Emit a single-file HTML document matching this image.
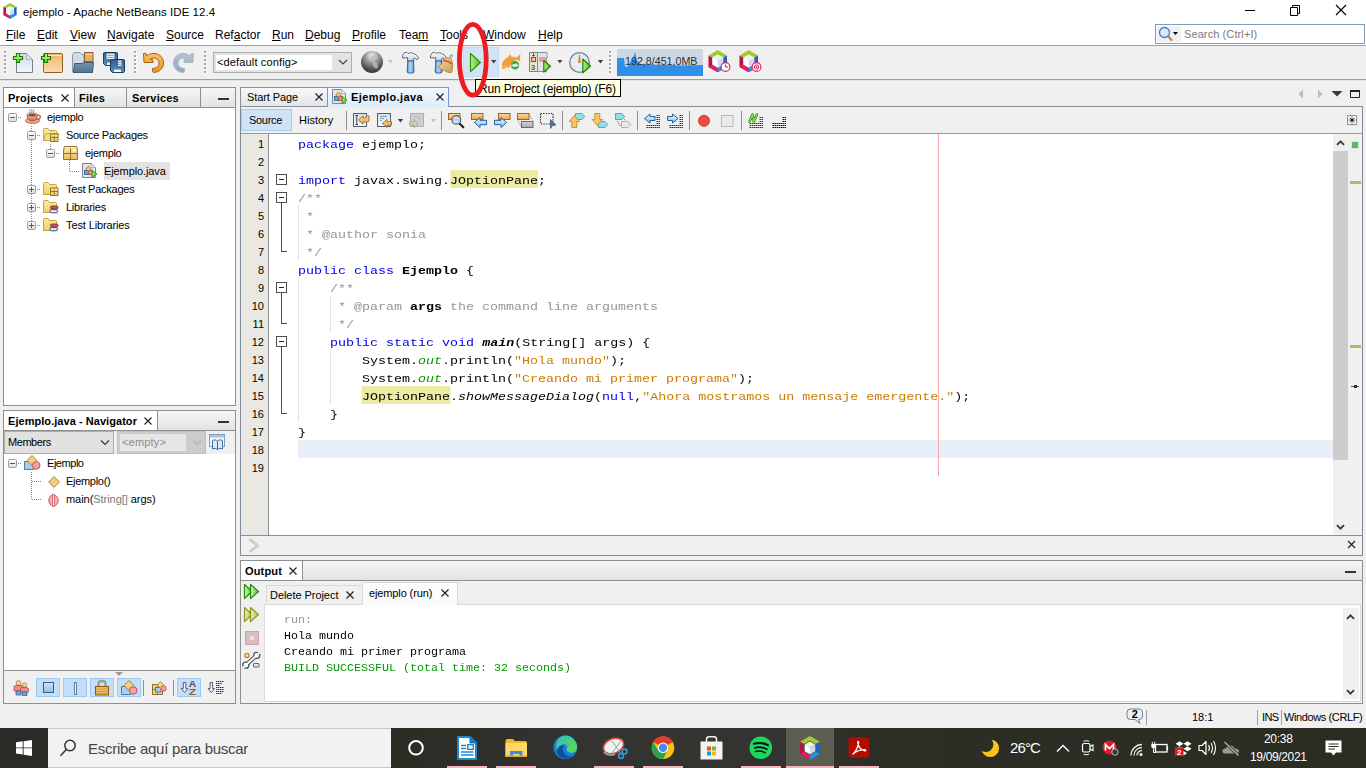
<!DOCTYPE html>
<html lang="es">
<head>
<meta charset="utf-8">
<title>ejemplo - Apache NetBeans IDE 12.4</title>
<style>
*{box-sizing:border-box;margin:0;padding:0}
html,body{width:1366px;height:768px;overflow:hidden;background:#f0f0f0;font-family:"Liberation Sans",sans-serif;font-size:11px;color:#000}
.a{position:absolute}
.t{position:absolute;white-space:nowrap;line-height:1}
.ui{font-family:"Liberation Sans",sans-serif;font-size:12px}
.th{font-family:"Liberation Sans",sans-serif;font-size:11px}
.mono{font-family:"Liberation Mono",monospace;font-size:13px;letter-spacing:0.2px}
u{text-decoration:underline;text-underline-offset:1px}
.mi{top:29px;font-size:12px}
.hnd{width:3px;height:24px;background-image:radial-gradient(circle at 1px 1px,#a8a8a8 0.9px,transparent 1.1px),radial-gradient(circle at 2px 2px,#fff 0.9px,transparent 1.1px);background-size:3px 4px}
.panel{border:1px solid #8e8f8f;background:#fff}
.tabbar{background:linear-gradient(#f6f6f6,#e2e2e2)}
.vsep{width:1px;background:#8e8f8f}
.tabt{font-weight:bold;font-size:11px;letter-spacing:0.2px}
.tr{font-size:11px;letter-spacing:-0.3px}
.vdot{width:1px;background-image:linear-gradient(#8a8a8a 50%,transparent 50%);background-size:1px 2px}
.hdot{height:1px;background-image:linear-gradient(90deg,#8a8a8a 50%,transparent 50%);background-size:2px 1px}
.nbtn{width:24px;height:19px;background:#c5def5;border:1px solid #99cbf5}
.ln{left:241px;width:23px;text-align:right;font-size:11px;letter-spacing:0px}
.code{left:298px;height:18px;line-height:18px;font-family:"Liberation Mono",monospace;font-size:10.500px;white-space:pre;transform:scaleX(1.26984);transform-origin:0 0;padding-top:2px}
.code b{font-weight:bold}
.k{color:#0000e6}.c{color:#969696}.c .ct{color:#969696}.c .ca{color:#000}.s{color:#ce7b00}.f{color:#009900}
.hl{background:#ecebA3;padding:5.050px 0 1.050px}
.gd{width:1px;background-image:linear-gradient(#c4c4c4 50%,transparent 50%);background-size:1px 2px}
.out{left:284px;height:16px;line-height:16px;font-family:"Liberation Mono",monospace;font-size:10px;white-space:pre;transform:scaleX(1.16667);transform-origin:0 0}
.ul{top:766px;height:2px;background:#f3b6be}
/* SECTION-CSS */
</style>
</head>
<body>
<!-- TITLEBAR -->
<div class="a" style="left:0;top:0;width:1366px;height:45px;background:#fff"></div>
<svg width="0" height="0" style="position:absolute"><defs>
<symbol id="nbcube" viewBox="0 0 20 23">
<path d="M10 0L19.500 5.500L15.700 7.700L10 4.400L4.300 7.700L0.500 5.500Z" fill="#a2c837"/>
<path d="M0.500 5.500L4.300 7.700V15.100L10 18.400V22.800L0.500 17.300Z" fill="#b3134a"/>
<path d="M0.500 17.300L4.300 15.100L10 18.400V22.800Z" fill="#e81d5f"/>
<path d="M19.500 5.500L15.700 7.700V15.100L10 18.400V22.800L19.500 17.300Z" fill="#1f62c8"/>
<path d="M19.500 17.300L15.700 15.100L10 18.400V22.800Z" fill="#2f8ee6"/>
<path d="M10 5.200L15 8.100L10 11L5 8.100Z" fill="#eef3e2"/>
<path d="M5 8.100L10 11V17.600L5 14.700Z" fill="#ffffff"/>
<path d="M15 8.100L10 11V17.600L15 14.700Z" fill="#cfdaea"/>
</symbol></defs></svg>
<svg class="a" style="left:3px;top:3px" width="14" height="16"><use href="#nbcube"/></svg>
<div class="t ui" id="ttl" style="left:23px;top:7px;font-size:11.500px;letter-spacing:0.05px">ejemplo - Apache NetBeans IDE 12.4</div>
<svg class="a" style="left:1240px;top:0" width="120" height="22" viewBox="0 0 120 22" fill="none" stroke="#000" stroke-width="1">
<path d="M5 10.5H15"/>
<path d="M50.5 7.5H57.5V15.500H50.5Z"/><path d="M52.5 7.500V5.500H59.5V13.500H57.5"/>
<path d="M96 5L106 15M106 5L96 15" stroke-width="1.1"/>
</svg>
<!-- /TITLEBAR -->
<!-- MENUBAR -->
<div class="t ui mi" style="left:6px"><u>F</u>ile</div>
<div class="t ui mi" style="left:37px"><u>E</u>dit</div>
<div class="t ui mi" style="left:70px"><u>V</u>iew</div>
<div class="t ui mi" style="left:107px"><u>N</u>avigate</div>
<div class="t ui mi" style="left:166px"><u>S</u>ource</div>
<div class="t ui mi" style="left:215px">Ref<u>a</u>ctor</div>
<div class="t ui mi" style="left:272px"><u>R</u>un</div>
<div class="t ui mi" style="left:305px"><u>D</u>ebug</div>
<div class="t ui mi" style="left:352px"><u>P</u>rofile</div>
<div class="t ui mi" style="left:399px">Tea<u>m</u></div>
<div class="t ui mi" style="left:440px"><u>T</u>ools</div>
<div class="t ui mi" style="left:483px"><u>W</u>indow</div>
<div class="t ui mi" style="left:538px"><u>H</u>elp</div>
<div class="a" style="left:1155px;top:24px;width:210px;height:20px;border:1px solid #7f9db9;background:#fff"></div>
<div class="a" style="left:1157px;top:26px;width:24px;height:16px;background:#f0f0f0"></div>
<svg class="a" style="left:1158px;top:26px" width="22" height="16" viewBox="0 0 22 16">
<path d="M9 9L13.500 14" stroke="#c98a2b" stroke-width="2.200" stroke-linecap="round"/>
<circle cx="6.500" cy="6.500" r="5" fill="#dbeafb" stroke="#3f7fd0" stroke-width="1.300"/>
<path d="M15 6H20L17.500 9Z" fill="#000"/>
</svg>
<div class="t th" style="left:1184px;top:29px;color:#7a7a7a;font-size:11px;letter-spacing:0.1px">Search (Ctrl+I)</div>
<div class="a" style="left:0;top:45px;width:1366px;height:1px;background:#a0a0a0"></div>
<!-- /MENUBAR -->
<!-- TOOLBAR -->
<div class="a" style="left:0;top:79px;width:1366px;height:1px;background:#a0a0a0"></div>
<div class="a" style="left:0;top:80px;width:1366px;height:1px;background:#e3e3e3"></div>
<div class="a hnd" style="left:4px;top:51px"></div>
<div class="a hnd" style="left:134px;top:51px"></div>
<div class="a hnd" style="left:204px;top:51px"></div>
<div class="a hnd" style="left:609px;top:51px"></div>
<div class="a" style="left:463px;top:47px;width:36px;height:30px;background:#d1e4f6;border:1px solid #c3dcf3"></div>
<svg class="a" style="left:0;top:46px" width="800" height="34" viewBox="0 46 800 34">
<defs>
<linearGradient id="gPage" x1="0" y1="0" x2="0" y2="1"><stop offset="0" stop-color="#cbd8e6"/><stop offset="1" stop-color="#f6f9fc"/></linearGradient>
<linearGradient id="gBox" x1="0" y1="0" x2="0" y2="1"><stop offset="0" stop-color="#ecb569"/><stop offset="1" stop-color="#f8dcb4"/></linearGradient>
<linearGradient id="gPlus" x1="0" y1="0" x2="0" y2="1"><stop offset="0" stop-color="#d4fba6"/><stop offset="1" stop-color="#6fd21e"/></linearGradient>
<linearGradient id="gFold" x1="0" y1="0" x2="0" y2="1"><stop offset="0" stop-color="#7391b0"/><stop offset="1" stop-color="#54738f"/></linearGradient>
<linearGradient id="gFlop" x1="0" y1="0" x2="0" y2="1"><stop offset="0" stop-color="#2d5f8f"/><stop offset="1" stop-color="#5f8db6"/></linearGradient>
<linearGradient id="gUndo" x1="0" y1="0" x2="0" y2="1"><stop offset="0" stop-color="#f9c262"/><stop offset="1" stop-color="#e8921a"/></linearGradient>
<linearGradient id="gRedo" x1="0" y1="0" x2="0" y2="1"><stop offset="0" stop-color="#b4c3d1"/><stop offset="1" stop-color="#93a8bb"/></linearGradient>
<radialGradient id="gGlobe" cx="0.5" cy="0.22" r="0.75"><stop offset="0" stop-color="#f4f4f4"/><stop offset="0.4" stop-color="#9c9c9c"/><stop offset="0.75" stop-color="#5a5a5a"/><stop offset="1" stop-color="#3a3a3a"/></radialGradient>
<linearGradient id="gHandle" x1="0" y1="0" x2="1" y2="0"><stop offset="0" stop-color="#5a9ad6"/><stop offset="0.5" stop-color="#b5d6f3"/><stop offset="1" stop-color="#4d8fcf"/></linearGradient>
<linearGradient id="gHead" x1="0" y1="0" x2="0" y2="1"><stop offset="0" stop-color="#ffffff"/><stop offset="1" stop-color="#c5ccd3"/></linearGradient>
<linearGradient id="gPlay" x1="0" y1="0" x2="1" y2="0"><stop offset="0" stop-color="#b9ee8c"/><stop offset="1" stop-color="#4fc01a"/></linearGradient>
<linearGradient id="gBroom" x1="0" y1="0" x2="1" y2="1"><stop offset="0" stop-color="#f3d9ab"/><stop offset="1" stop-color="#c99a55"/></linearGradient>
</defs>
<!-- new file -->
<path d="M16.500 53.500H26.500L32.500 59.500V72.500H16.500Z" fill="url(#gPage)" stroke="#75828f"/>
<path d="M26.500 53.500V59.500H32.500Z" fill="#dfe8f1" stroke="#9aa7b4" stroke-width="0.800"/>
<path d="M16.500 53.500H19.500V56.500H22.500V59.500H19.500V62.500H16.500V59.500H13.500V56.500H16.500Z" fill="url(#gPlus)" stroke="#148200" stroke-width="1.200"/>
<!-- new project -->
<rect x="43.500" y="53.500" width="19" height="19" rx="1" fill="url(#gBox)" stroke="#94601f"/>
<path d="M44.500 55.500H61.500" stroke="#fbe6c7" stroke-width="1"/>
<path d="M44.500 53.500H47.500V56.500H50.500V59.500H47.500V62.500H44.500V59.500H41.500V56.500H44.500Z" fill="url(#gPlus)" stroke="#148200" stroke-width="1.200"/>
<!-- open project -->
<path d="M72.500 72V54.500L74 52.500H80L81.500 54.500H84V62H92.500V72.500H73Z" fill="#cfdbe7" stroke="#8a9bab"/>
<rect x="84.500" y="52.500" width="8.500" height="9" fill="#e8ad62" stroke="#94601f"/>
<path d="M85 54.500H92.500" stroke="#f6d7ac"/>
<path d="M74.500 63.500H82L83.500 62.500H93.500L92.500 72.500H73.500Z" fill="url(#gFold)" stroke="#3f5b76"/>
<!-- save all -->
<g>
<path d="M103.500 53.500Q103.500 52.500 104.500 52.500H116.500Q117.500 52.500 117.500 53.500V64.500L116.500 65.500H105.500L103.500 63.500Z" fill="url(#gFlop)" stroke="#163f66"/>
<rect x="106.500" y="53.500" width="8" height="5.500" fill="#e9eef4"/>
<path d="M107.500 55.500H113.500M107.500 57.500H113.500" stroke="#9aa5b0"/>
<path d="M107 65V63.500Q107 62.500 108 62.500H113Q114 62.500 114 63.500V65Z" fill="#f4f6f8"/>
<path d="M110.500 60.500Q110.500 59.500 111.500 59.500H123.500Q124.500 59.500 124.500 60.500V71.500L123.500 72.500H112.500L110.500 70.500Z" fill="url(#gFlop)" stroke="#163f66"/>
<path d="M118 60.500H121.500V66H118Z" fill="#e9eef4"/>
<path d="M118 62.500H121M118 64.500H121" stroke="#9aa5b0"/>
<path d="M114 72V70.500Q114 69.500 115 69.500H120Q121 69.500 121 70.500V72Z" fill="#f4f6f8"/>
</g>
<!-- undo -->
<path d="M143.500 53.500L146 53.500L146.500 56C149 54 152 53.200 155 53.500C160 54 163.500 58 163.500 63C163.500 68.500 159 72.500 153.500 72.500L152.500 71.500V68.500C156 68.500 159 66.500 159 63C159 60 156.500 58 154 58C152.500 58 151 58.500 150 59.500L153 60V62.500L144 62.500Z" fill="url(#gUndo)" stroke="#a9600c" stroke-width="1" stroke-linejoin="round"/>
<!-- redo -->
<path d="M193.500 53.500L191 53.500L190.500 56C188 54 185 53.200 182 53.500C177 54 173.500 58 173.500 63C173.500 68.500 178 72.500 183.500 72.500L184.500 71.500V68.500C181 68.500 178 66.500 178 63C178 60 180.500 58 183 58C184.500 58 186 58.500 187 59.500L184 60V62.500L193 62.500Z" fill="url(#gRedo)" stroke="#aab8c5" stroke-width="1" stroke-linejoin="round"/>
<!-- globe -->
<circle cx="372" cy="62" r="11" fill="url(#gGlobe)"/>
<path d="M371 56C374 54 377 55 378 58C376 58 374 60 375 62C378 63 379 66 377 69C374 68 372 66 373 63C371 61 370 58 371 56Z" fill="#bdbdbd" opacity="0.750"/>
<path d="M388 60H393L390.500 63.500Z" fill="#c2c2c2"/>
<!-- hammer -->
<path d="M402.5 58L402.5 55.500L404.5 52.500H407L408 53.500C411 52 415.5 53 418.8 58L417 59.800C415.5 58.300 414.5 58 413.8 58.300V61H407.5V57.500L405 58Z" fill="url(#gHead)" stroke="#5d6d7d" stroke-linejoin="round"/>
<path d="M407.8 61H413.5L414 72L413 73H408.2L407.2 72Z" fill="url(#gHandle)" stroke="#2469ab" stroke-width="1"/>
<!-- clean hammer -->
<path d="M430.5 58L430.5 55.500L432.5 52.500H435L436 53.500C439 52 443.5 53 446.8 58L445 59.800C443.5 58.300 442.5 58 441.8 58.300V61H435.5V57.500L433 58Z" fill="url(#gHead)" stroke="#5d6d7d" stroke-linejoin="round"/>
<path d="M435.8 61H441.5L442 72L441 73H436.2L435.2 72Z" fill="url(#gHandle)" stroke="#2469ab" stroke-width="1"/>
<path d="M449.500 56L452 54.500L452.500 56.500L451 58Z" fill="#dfe6ee" stroke="#6b7c8c" stroke-width="0.800"/>
<path d="M444 58.500C446 57 449 57.500 451.500 59.500C453 63 453 68 451.500 72.500C448 73 446 71.500 444.500 70.500C442.500 70.500 440 69 438 67C441 65 443 62 444 58.500Z" fill="url(#gBroom)" stroke="#a97a3a" stroke-width="0.800"/>
<path d="M443.500 60.500C446 60.500 449.500 62 452 64" stroke="#d8452c" stroke-width="1.300" fill="none"/>
<!-- run -->
<path d="M470.500 53.500L480.500 62.500L470.500 71.500Z" fill="url(#gPlay)" stroke="#2e8f0c" stroke-width="1.200" stroke-linejoin="round"/>
<path d="M491 60H496.500L493.750 63.500Z" fill="#444"/>
<!-- fish -->
<path d="M502.300 66.500C502 62 505 58.500 508.500 57.200L510.300 54.800L511.200 57C513 57 514.800 57.500 516.300 57.800L520.200 54.800C519.600 56.800 519.600 58.800 520 60.800L516 59.500C514 61 512.500 62.500 510.500 64C509.800 65.300 509.300 66.800 508.800 68.300L507.300 66.300C505.800 67.500 504.300 68.500 502.800 68.800Z" fill="#f0a235" stroke="#e69422" stroke-width="0.500" stroke-linejoin="round"/>
<circle cx="504" cy="66" r="0.600" fill="#fff"/>
<circle cx="515" cy="65.300" r="3.300" fill="#f0f8ee" stroke="#3fa548" stroke-width="1.900"/>
<path d="M511 65.300H513.500M516.500 65.300H519" stroke="#f0f0f0" stroke-width="1"/>
<path d="M513 63.500L515.500 61.300V64.500ZM517 67.200L514.500 69.400V66.200Z" fill="#2f9a3c"/>
<!-- debug -->
<path d="M529.500 52.500H537.500V71.500H529.500Z" fill="#efe5c3" stroke="#6f7f92"/>
<path d="M537.500 52.500H546.500L547.500 54L546.500 55.500L547.500 57L546.500 58.500V71.500H537.500Z" fill="#e1e5ea" stroke="#7f8c9a"/>
<rect x="539" y="57" width="7.500" height="4.800" fill="#f69aa2"/>
<rect x="531.500" y="57.500" width="4" height="4" fill="#f4c9cc" stroke="#b83a44" stroke-width="1.100"/>
<path d="M533.500 53V56.500M532 55.500H535" stroke="#555" stroke-width="0.900" fill="none"/>
<text x="531" y="69.500" font-family="Liberation Sans,sans-serif" font-size="7.500" font-weight="bold" fill="#4a5878">3</text>
<path d="M543.800 60.500L550.500 66.300L543.800 72Z" fill="url(#gPlay)" stroke="#1f7f06" stroke-width="1.200" stroke-linejoin="round"/>
<path d="M557.300 60H562.500L559.900 63.500Z" fill="#444"/>
<!-- profile -->
<circle cx="579.500" cy="62.500" r="9.800" fill="#e3eef8" stroke="#76828f" stroke-width="1.300"/>
<circle cx="579.500" cy="62.500" r="7.800" fill="none" stroke="#9aa7b5" stroke-width="0.800" stroke-dasharray="0.700 3.380"/>
<path d="M579 55L580 55L580.800 63H578.200Z" fill="#e8792a"/>
<path d="M582.800 59L590.500 66L582.800 72.800Z" fill="url(#gPlay)" stroke="#1f7f06" stroke-width="1.200" stroke-linejoin="round"/>
<path d="M597.800 60H603.200L600.500 63.500Z" fill="#444"/>
<!-- memory -->
<rect x="617" y="49" width="86" height="27" fill="#cbd7e3"/>
<path d="M617 76V58H624L625 66.500H628L630 62L633 59L635 51.500L636.500 60L640 64L650 64.500L665 65L680 65.500L703 65V76Z" fill="#2f8ee8"/>
<text x="625" y="65" font-family="Liberation Sans,sans-serif" font-size="11" fill="#303030" textLength="72.500" lengthAdjust="spacingAndGlyphs">192,8/451,0MB</text>
<!-- profiler icons -->
<svg x="708" y="50" width="19.500" height="22.500"><use href="#nbcube"/></svg>
<circle cx="725.500" cy="67" r="4.400" fill="#fff" stroke="#d81b60" stroke-width="1.100"/>
<path d="M725.500 64.500V67H728" stroke="#d81b60" stroke-width="1" fill="none"/>
<svg x="739" y="50" width="19.500" height="22.500"><use href="#nbcube"/></svg>
<circle cx="756.500" cy="67" r="4.400" fill="#fff" stroke="#d81b60" stroke-width="1.100"/>
<circle cx="756.500" cy="67" r="2.200" fill="none" stroke="#d81b60" stroke-width="1"/>
<rect x="755.700" y="66.200" width="1.600" height="1.600" fill="#d81b60"/>
</svg>
<!-- combo -->
<div class="a" style="left:213px;top:52px;width:139px;height:21px;background:#e3e3e3;border:1px solid #adadad"></div>
<div class="a" style="left:216px;top:55px;width:116px;height:15px;background:#fff"></div>
<div class="t th" style="left:217px;top:57px;font-size:11px;letter-spacing:0.15px">&lt;default config&gt;</div>
<svg class="a" style="left:338px;top:58px" width="10" height="8" viewBox="0 0 10 8"><path d="M1 2L5 6L9 2" fill="none" stroke="#404040" stroke-width="1.100"/></svg>
<!-- /TOOLBAR -->
<!-- PROJECTS -->
<svg width="0" height="0" style="position:absolute">
<defs>
<linearGradient id="gExp" x1="0" y1="0" x2="0" y2="1"><stop offset="0" stop-color="#ffffff"/><stop offset="1" stop-color="#dcdcdc"/></linearGradient>
<linearGradient id="gFolderY" x1="0" y1="0" x2="0" y2="1"><stop offset="0" stop-color="#fbe9a6"/><stop offset="1" stop-color="#f0cf63"/></linearGradient>
<linearGradient id="gPkg" x1="0" y1="0" x2="0" y2="1"><stop offset="0" stop-color="#f8e6ac"/><stop offset="1" stop-color="#e6c062"/></linearGradient>
<symbol id="exM" viewBox="0 0 9 9"><rect x="0.500" y="0.500" width="8" height="8" rx="1.200" fill="url(#gExp)" stroke="#9b9b9b"/><path d="M2 4.500H7" stroke="#3557b8" stroke-width="1"/></symbol>
<symbol id="exP" viewBox="0 0 9 9"><rect x="0.500" y="0.500" width="8" height="8" rx="1.200" fill="url(#gExp)" stroke="#9b9b9b"/><path d="M2 4.500H7M4.500 2V7" stroke="#3557b8" stroke-width="1"/></symbol>
<symbol id="fPkg" viewBox="0 0 16 14"><path d="M0.500 12.500V1.500Q0.500 0.500 1.500 0.500H5L6.500 2.500H12.500Q13.500 2.500 13.500 3.500V12.500Z" fill="url(#gFolderY)" stroke="#c9a43c"/><rect x="7.500" y="6" width="7.500" height="7.500" fill="#f1d27a" stroke="#8a6a1c" stroke-width="0.900"/><path d="M7.500 9.500H15M11.250 6V13.500" stroke="#8a6a1c" stroke-width="0.800"/><path d="M8 7.300H14.500" stroke="#fbeebb" stroke-width="0.800"/></symbol>
<symbol id="fPkgO" viewBox="0 0 16 14"><path d="M0.500 12.500V1.500Q0.500 0.500 1.500 0.500H5L6.500 2.500H12.500Q13.500 2.500 13.500 3.500V12.500Z" fill="url(#gFolderY)" stroke="#c9a43c"/><path d="M0.500 12.500L3 5.500H15.500L13.500 12.500Z" fill="#f6de88" stroke="#c9a43c" stroke-width="0.900"/><rect x="7.500" y="6" width="7.500" height="7.500" fill="#f1d27a" stroke="#8a6a1c" stroke-width="0.900"/><path d="M7.500 9.500H15M11.250 6V13.500" stroke="#8a6a1c" stroke-width="0.800"/><path d="M8 7.300H14.500" stroke="#fbeebb" stroke-width="0.800"/></symbol>
<symbol id="fLib" viewBox="0 0 16 14"><path d="M0.500 12.500V1.500Q0.500 0.500 1.500 0.500H5L6.500 2.500H12.500Q13.500 2.500 13.500 3.500V12.500Z" fill="url(#gFolderY)" stroke="#c9a43c"/><rect x="7.500" y="6" width="7.500" height="3.200" rx="1.400" fill="#c0545a" stroke="#6e2a30" stroke-width="0.800"/><rect x="7" y="9.600" width="7.500" height="3.200" rx="1.400" fill="#e8e8f0" stroke="#2a3f80" stroke-width="0.900"/></symbol>
<symbol id="pkg" viewBox="0 0 16 15"><path d="M1.300 0.500H13.700L14.500 4.500V13.500H0.500V4.500Z" fill="url(#gPkg)" stroke="#9a7424"/><path d="M0.500 7.500H14.500M7.500 0.500V13.500" stroke="#9a7424"/><path d="M1.800 1.700H13.200" stroke="#fdf3cd"/><rect x="9.500" y="3.500" width="3" height="2" fill="#fdf6dc"/></symbol>
<symbol id="jfile" viewBox="0 0 16 16"><path d="M0.500 0.500H9.500L13.500 4.500V14.500H0.500Z" fill="#dfe6ee" stroke="#7c8794"/><path d="M9.500 0.500V4.500H13.500Z" fill="#f4f7fa" stroke="#9aa5b0" stroke-width="0.800"/><rect x="2.500" y="7.500" width="4.500" height="4" fill="#6fa3d8" stroke="#2f5f98" stroke-width="0.800"/><path d="M6.500 3L9.300 5.800L6.500 8.600L3.700 5.800Z" fill="#f1c36b" stroke="#a87420" stroke-width="0.800"/><circle cx="8.500" cy="9.500" r="2.300" fill="#f08f8f" stroke="#b03a3a" stroke-width="0.800"/><path d="M10 7.500L15 11L10 14.500Z" fill="#8be04e" stroke="#2e8f0c" stroke-width="0.900" stroke-linejoin="round"/></symbol>
<symbol id="cup" viewBox="0 0 16 15"><defs><linearGradient id="gCup" x1="0" y1="0" x2="0" y2="1"><stop offset="0" stop-color="#f2c0ac"/><stop offset="1" stop-color="#c9694e"/></linearGradient></defs><path d="M4.500 0.500Q5.500 2 4.500 4M6.500 0Q7.500 2 6.500 4.500M8.500 0.500Q9.500 2 8.500 4" stroke="#6a6a6a" stroke-width="0.700" fill="none"/><ellipse cx="7.500" cy="11.700" rx="7" ry="2.800" fill="#eaa88f" stroke="#b8543a" stroke-width="0.800"/><path d="M11.500 6.500C14.500 5.500 16 7 15 9C14 10.500 12 10.800 10.500 10.300" fill="none" stroke="#c4644a" stroke-width="1.400"/><path d="M2 5.500H12.500C12.500 9.500 10.500 12 7.300 12C4 12 2 9.500 2 5.500Z" fill="url(#gCup)" stroke="#a84830" stroke-width="0.800"/><ellipse cx="7.250" cy="5.600" rx="5.250" ry="1.500" fill="#f7dccf" stroke="#a84830" stroke-width="0.700"/><ellipse cx="7.250" cy="5.900" rx="3.800" ry="0.900" fill="#7a3520"/></symbol>
<symbol id="tabx" viewBox="0 0 8 8"><path d="M0.500 0.500L7.500 7.500M7.500 0.500L0.500 7.500" stroke="#222" stroke-width="1.200"/></symbol>
</defs>
</svg>
<div class="a panel" style="left:3px;top:87px;width:233px;height:319px"></div>
<div class="a tabbar" style="left:4px;top:88px;width:231px;height:19px"></div>
<div class="a" style="left:4px;top:107px;width:231px;height:1px;background:#8e8f8f"></div>
<div class="a" style="left:4px;top:88px;width:70px;height:19px;background:#fff"></div>
<div class="a vsep" style="left:74px;top:88px;height:19px"></div>
<div class="a vsep" style="left:126px;top:88px;height:19px"></div>
<div class="a vsep" style="left:200px;top:88px;height:19px"></div>
<div class="t tabt" style="left:8px;top:93px">Projects</div>
<svg class="a" style="left:61px;top:94px" width="8" height="8"><use href="#tabx"/></svg>
<div class="t tabt" style="left:79px;top:93px">Files</div>
<div class="t tabt" style="left:132px;top:93px">Services</div>
<div class="a" style="left:218px;top:98px;width:11px;height:2px;background:#333"></div>
<!-- tree lines -->
<div class="a vdot" style="left:31px;top:126px;height:96px"></div>
<div class="a vdot" style="left:50px;top:144px;height:6px"></div>
<div class="a vdot" style="left:69px;top:160px;height:11px"></div>
<div class="a hdot" style="left:18px;top:117px;width:3px"></div>
<div class="a hdot" style="left:37px;top:135px;width:3px"></div>
<div class="a hdot" style="left:56px;top:153px;width:3px"></div>
<div class="a hdot" style="left:70px;top:171px;width:10px"></div>
<div class="a hdot" style="left:37px;top:189px;width:3px"></div>
<div class="a hdot" style="left:37px;top:207px;width:3px"></div>
<div class="a hdot" style="left:37px;top:225px;width:3px"></div>
<svg class="a" style="left:8px;top:113px" width="9" height="9"><use href="#exM"/></svg>
<svg class="a" style="left:27px;top:131px" width="9" height="9"><use href="#exM"/></svg>
<svg class="a" style="left:46px;top:149px" width="9" height="9"><use href="#exM"/></svg>
<svg class="a" style="left:27px;top:185px" width="9" height="9"><use href="#exP"/></svg>
<svg class="a" style="left:27px;top:203px" width="9" height="9"><use href="#exP"/></svg>
<svg class="a" style="left:27px;top:221px" width="9" height="9"><use href="#exP"/></svg>
<svg class="a" style="left:25px;top:109px" width="16" height="15"><use href="#cup"/></svg>
<svg class="a" style="left:43px;top:128px" width="16" height="14"><use href="#fPkgO"/></svg>
<svg class="a" style="left:63px;top:146px" width="16" height="15"><use href="#pkg"/></svg>
<svg class="a" style="left:82px;top:163px" width="16" height="16"><use href="#jfile"/></svg>
<svg class="a" style="left:43px;top:182px" width="16" height="14"><use href="#fPkg"/></svg>
<svg class="a" style="left:43px;top:200px" width="16" height="14"><use href="#fLib"/></svg>
<svg class="a" style="left:43px;top:218px" width="16" height="14"><use href="#fLib"/></svg>
<div class="a" style="left:104px;top:162px;width:66px;height:18px;background:#e3e3e3"></div>
<div class="t tr" style="left:47px;top:112px">ejemplo</div>
<div class="t tr" style="left:66px;top:130px">Source Packages</div>
<div class="t tr" style="left:85px;top:148px">ejemplo</div>
<div class="t tr" style="left:104px;top:166px;letter-spacing:-0.1px">Ejemplo.java</div>
<div class="t tr" style="left:66px;top:184px;letter-spacing:-0.24px">Test Packages</div>
<div class="t tr" style="left:66px;top:202px;letter-spacing:-0.25px">Libraries</div>
<div class="t tr" style="left:66px;top:220px;letter-spacing:-0.12px">Test Libraries</div>
<!-- /PROJECTS -->
<!-- NAVIGATOR -->
<svg width="0" height="0" style="position:absolute">
<defs>
<linearGradient id="gSq" x1="0" y1="0" x2="0" y2="1"><stop offset="0" stop-color="#d3e6f7"/><stop offset="1" stop-color="#8fbde9"/></linearGradient>
<symbol id="cls" viewBox="0 0 17 15"><path d="M0.500 6.500H9.500V14.500H0.500Z" fill="#a8cdee" stroke="#3a6ea5" stroke-width="0.900"/><path d="M8 0.500L13 5.500L8 10.500L3 5.500Z" fill="#f3cf82" stroke="#a87420" stroke-width="0.900"/><circle cx="12.200" cy="10.500" r="3.800" fill="#f7a0a0" stroke="#c04848" stroke-width="0.900"/></symbol>
<symbol id="dia" viewBox="0 0 12 12"><path d="M6 0.600L11.400 6L6 11.400L0.600 6Z" fill="#f3cf82" stroke="#a87420" stroke-width="0.900"/></symbol>
<symbol id="meth" viewBox="0 0 12 14"><ellipse cx="6" cy="7" rx="5.200" ry="6" fill="#f7b0b0" stroke="#c04848" stroke-width="0.900"/><rect x="5" y="0.500" width="2" height="13" fill="#fbe0e0" stroke="#c04848" stroke-width="0.700"/></symbol>
</defs>
</svg>
<div class="a panel" style="left:3px;top:410px;width:233px;height:294px"></div>
<div class="a tabbar" style="left:4px;top:411px;width:231px;height:19px"></div>
<div class="a" style="left:4px;top:430px;width:231px;height:1px;background:#8e8f8f"></div>
<div class="a" style="left:4px;top:411px;width:153px;height:19px;background:#fff"></div>
<div class="a vsep" style="left:157px;top:411px;height:19px"></div>
<div class="t tabt" style="left:8px;top:416px;letter-spacing:0.05px">Ejemplo.java - Navigator</div>
<svg class="a" style="left:144px;top:417px" width="8" height="8"><use href="#tabx"/></svg>
<div class="a" style="left:218px;top:421px;width:11px;height:2px;background:#333"></div>
<div class="a" style="left:4px;top:431px;width:231px;height:23px;background:#f0f0f0"></div>
<div class="a" style="left:4px;top:431px;width:110px;height:23px;background:#e1e1e1;border:1px solid #adadad"></div>
<div class="t tr" style="left:8px;top:437px;letter-spacing:-0.45px">Members</div>
<svg class="a" style="left:100px;top:439px" width="10" height="8" viewBox="0 0 10 8"><path d="M1 1.500L5 5.500L9 1.500" fill="none" stroke="#333" stroke-width="1.100"/></svg>
<div class="a" style="left:117px;top:431px;width:89px;height:23px;background:#cccccc;border:1px solid #bfbfbf"></div>
<div class="a" style="left:120px;top:434px;width:66px;height:17px;background:#e6e6e6"></div>
<div class="t tr" style="left:122px;top:437px;color:#8c8c8c;letter-spacing:0.17px">&lt;empty&gt;</div>
<svg class="a" style="left:192px;top:439px" width="10" height="8" viewBox="0 0 10 8"><path d="M1 1.500L5 5.500L9 1.500" fill="none" stroke="#b4b4b4" stroke-width="1.100"/></svg>
<svg class="a" style="left:209px;top:434px" width="17" height="17" viewBox="0 0 17 17"><rect x="0.500" y="0.500" width="15" height="12" fill="#f4f8fc" stroke="#7f9db9"/><rect x="1" y="1" width="14" height="2.500" fill="#a9c4de"/><path d="M3.500 6.500C5.500 5.500 7 5.800 8.500 7V15.500C7 14.300 5.500 14 3.500 15Z" fill="#dbe8f5" stroke="#2f5f98" stroke-width="0.900"/><path d="M13.500 6.500C11.500 5.500 10 5.800 8.500 7V15.500C10 14.300 11.500 14 13.500 15Z" fill="#dbe8f5" stroke="#2f5f98" stroke-width="0.900"/></svg>
<!-- nav tree -->
<div class="a vdot" style="left:31px;top:472px;height:28px"></div>
<div class="a hdot" style="left:18px;top:463px;width:3px"></div>
<div class="a hdot" style="left:32px;top:481px;width:9px"></div>
<div class="a hdot" style="left:32px;top:499px;width:9px"></div>
<svg class="a" style="left:8px;top:459px" width="9" height="9"><use href="#exM"/></svg>
<svg class="a" style="left:24px;top:455px" width="17" height="15"><use href="#cls"/></svg>
<svg class="a" style="left:48px;top:476px" width="12" height="12"><use href="#dia"/></svg>
<svg class="a" style="left:48px;top:494px" width="11" height="13"><use href="#meth"/></svg>
<div class="t tr" style="left:47px;top:458px;letter-spacing:-0.46px">Ejemplo</div>
<div class="t tr" style="left:66px;top:476px">Ejemplo()</div>
<div class="t tr" style="left:66px;top:494px;letter-spacing:-0.05px">main(<span style="color:#7a7a7a">String[]</span> args)</div>
<!-- nav toolbar -->
<div class="a" style="left:4px;top:670px;width:231px;height:1px;background:#8e8f8f"></div>
<div class="a" style="left:4px;top:671px;width:231px;height:32px;background:#f0f0f0"></div>
<svg class="a" style="left:115px;top:672px" width="8" height="4" viewBox="0 0 8 4"><path d="M0 0H8L4 4Z" fill="#9a9a9a"/></svg>
<div class="a nbtn" style="left:36px;top:678px"></div>
<div class="a nbtn" style="left:63px;top:678px"></div>
<div class="a nbtn" style="left:90px;top:678px"></div>
<div class="a nbtn" style="left:117px;top:678px"></div>
<div class="a nbtn" style="left:177px;top:678px"></div>
<div class="a" style="left:143px;top:680px;width:1px;height:16px;background:#8e8f8f"></div>
<div class="a" style="left:173px;top:680px;width:1px;height:16px;background:#8e8f8f"></div>
<svg class="a" style="left:0;top:676px" width="236" height="24" viewBox="0 676 236 24">
<!-- people -->
<circle cx="18.500" cy="683" r="2.500" fill="#f3cf9a" stroke="#b07a3a" stroke-width="0.700"/>
<path d="M14 687Q14 685.500 16 685.500H21Q23 685.500 23 687V691H14Z" fill="#f08a8a" stroke="#b04040" stroke-width="0.700"/>
<path d="M16 691H21V695H16Z" fill="#6fa3d8" stroke="#2f5f98" stroke-width="0.700"/>
<circle cx="24.500" cy="685" r="2.200" fill="#f3cf9a" stroke="#b07a3a" stroke-width="0.700"/>
<path d="M20.500 689Q20.500 687.500 22.500 687.500H26.500Q28.500 687.500 28.500 689V692H20.500Z" fill="#f08a8a" stroke="#b04040" stroke-width="0.700"/>
<path d="M22 692H27V695.500H22Z" fill="#6fa3d8" stroke="#2f5f98" stroke-width="0.700"/>
<!-- square -->
<rect x="43.500" y="682.500" width="10" height="10" fill="url(#gSq)" stroke="#3d5a78"/>
<!-- bar -->
<rect x="74.500" y="682.500" width="2" height="12" fill="#e8f1fa" stroke="#5f84aa"/>
<!-- lock -->
<path d="M98.500 687V684Q98.500 681 102 681Q105.500 681 105.500 684V687" fill="none" stroke="#9a9ea4" stroke-width="2.400"/>
<rect x="95.500" y="686.500" width="13" height="8.500" fill="#ebbd62" stroke="#8a5a14"/>
<path d="M96 689H108M96 691.500H108M96 693.500H108" stroke="#c8923a" stroke-width="0.800"/>
<!-- class -->
<g transform="translate(121,680)"><path d="M0.500 6.500H9.500V14.500H0.500Z" fill="#a8cdee" stroke="#3a6ea5" stroke-width="0.900"/><path d="M8 0.500L13 5.500L8 10.500L3 5.500Z" fill="#f3cf82" stroke="#a87420" stroke-width="0.900"/><circle cx="12.200" cy="10.500" r="3.800" fill="#f7a0a0" stroke="#c04848" stroke-width="0.900"/></g>
<!-- inherited -->
<g transform="translate(152,681)"><rect x="0.500" y="3.500" width="10" height="10" fill="#f1d27a" stroke="#8a6a1c" stroke-width="0.900"/><path d="M0.500 8.500H10.500M5.500 3.500V13.500" stroke="#8a6a1c" stroke-width="0.800"/><rect x="3.500" y="6.500" width="5.500" height="4.500" fill="#a8cdee" stroke="#3a6ea5" stroke-width="0.800"/><path d="M8.500 0.500L12 4L8.500 7.500L5 4Z" fill="#f3cf82" stroke="#a87420" stroke-width="0.800"/><circle cx="11.500" cy="7.500" r="2.700" fill="#f7a0a0" stroke="#c04848" stroke-width="0.800"/></g>
<!-- sort az -->
<path d="M183.300 682.500H185.800V688.500H187.800L184.550 692.600L181.300 688.500H183.300Z" fill="#f4f8fc" stroke="#4a5f78" stroke-width="1" stroke-linejoin="round"/>
<text x="188.800" y="687" font-family="Liberation Sans,sans-serif" font-weight="bold" font-size="9.500" fill="#4f5660" textLength="7.500" lengthAdjust="spacingAndGlyphs">A</text>
<text x="188.800" y="695" font-family="Liberation Sans,sans-serif" font-weight="bold" font-size="9.500" fill="#a3620f" textLength="7.500" lengthAdjust="spacingAndGlyphs">Z</text>
<!-- sort by source -->
<path d="M210.100 682.500H212.600V688.500H214.600L211.350 692.600L208.100 688.500H210.100Z" fill="#f4f8fc" stroke="#4a5f78" stroke-width="1" stroke-linejoin="round"/>
<path d="M216 681.500H224M216 683.500H222M216 685.500H220M216 687.500H224M216 689.500H224M216 691.500H224M216 693.500H221.500" stroke="#333" stroke-width="1" stroke-dasharray="1.500 0.500"/>
</svg>
<!-- /NAVIGATOR -->
<!-- EDITOR -->
<div class="a" style="left:240px;top:106px;width:1123px;height:450px;border:1px solid #808b99;background:#f0f0f0"></div>
<div class="a" style="left:240px;top:87px;width:88px;height:20px;border:1px solid #8e8f8f;border-bottom:none;background:linear-gradient(#f7f7f7,#e4e4e4)"></div>
<div class="a" style="left:327px;top:87px;width:122px;height:20px;border:1px solid #6f9bd0;border-bottom:none;background:linear-gradient(#f4f9ff,#dcebfa)"></div>
<div class="a" style="left:241px;top:106px;width:86px;height:1px;background:#8592a3"></div>
<div class="t tr" style="left:247px;top:92px;letter-spacing:-0.1px">Start Page</div>
<svg class="a" style="left:315px;top:93px" width="8" height="8"><use href="#tabx"/></svg>
<svg class="a" style="left:332px;top:89px" width="16" height="16"><use href="#jfile"/></svg>
<div class="t tr" style="left:351px;top:92px;font-weight:bold;letter-spacing:0.4px">Ejemplo.java</div>
<svg class="a" style="left:436px;top:93px" width="8" height="8"><use href="#tabx"/></svg>
<svg class="a" style="left:1294px;top:88px" width="70" height="12" viewBox="1294 88 70 12"><path d="M1303 89.500V98.500L1298.500 94Z" fill="#bdbdbd"/><path d="M1318 89.500V98.500L1322.500 94Z" fill="#bdbdbd"/><path d="M1331.500 91H1342.500L1337 96.500Z" fill="#3a3a3a"/><path d="M1350.500 91.500H1359.500V97.500H1350.500Z" fill="none" stroke="#222" stroke-width="1"/><path d="M1350 91H1360" stroke="#222" stroke-width="2"/></svg>
<div class="a" style="left:241px;top:133px;width:1121px;height:1px;background:#7f9fc8"></div>
<div class="a" style="left:241px;top:109px;width:51px;height:22px;background:#cfe3f7;border:1px solid #a5cdf2"></div>
<div class="t tr" style="left:249px;top:115px;letter-spacing:-0.3px">Source</div>
<div class="t tr" style="left:299px;top:115px;letter-spacing:0px">History</div>
<div class="a" style="left:346px;top:111px;width:1px;height:19px;background:#8e8f8f"></div>
<div class="a" style="left:441px;top:111px;width:1px;height:19px;background:#8e8f8f"></div>
<div class="a" style="left:562px;top:111px;width:1px;height:19px;background:#8e8f8f"></div>
<div class="a" style="left:637px;top:111px;width:1px;height:19px;background:#8e8f8f"></div>
<div class="a" style="left:689px;top:111px;width:1px;height:19px;background:#8e8f8f"></div>
<div class="a" style="left:741px;top:111px;width:1px;height:19px;background:#8e8f8f"></div>
<svg class="a" style="left:346px;top:108px" width="450" height="25" viewBox="346 108 450 25">
<defs>
<linearGradient id="gOr" x1="0" y1="0" x2="0" y2="1"><stop offset="0" stop-color="#fbd9a5"/><stop offset="1" stop-color="#f0a441"/></linearGradient>
<linearGradient id="gBl" x1="0" y1="0" x2="0" y2="1"><stop offset="0" stop-color="#e6f2fd"/><stop offset="1" stop-color="#8ec1ee"/></linearGradient>
<linearGradient id="gPg" x1="0" y1="0" x2="0" y2="1"><stop offset="0" stop-color="#cfe0f2"/><stop offset="1" stop-color="#f3f8fd"/></linearGradient>
<linearGradient id="gGr" x1="0" y1="0" x2="0" y2="1"><stop offset="0" stop-color="#d6d6d6"/><stop offset="1" stop-color="#a9a9a9"/></linearGradient>
</defs>
<!-- last edit -->
<rect x="353.500" y="113.500" width="13" height="13" fill="url(#gPg)" stroke="#4d5f70"/>
<path d="M355.500 115.500H358M355.500 124.500H358M356.750 115.500V124.500" stroke="#333" stroke-width="0.900" fill="none"/>
<path d="M358.500 120L363 115.800V118H366V116H369V120.500Q369 122 367.500 122H363V124.200Z" fill="url(#gOr)" stroke="#a86414" stroke-width="0.900" stroke-linejoin="round"/>
<!-- back -->
<rect x="377.500" y="113.500" width="13" height="13" fill="url(#gPg)" stroke="#4d5f70"/>
<path d="M380 116.500H387M380 118.500H384M380 120.500H382" stroke="#8a97a5" stroke-width="0.900"/>
<path d="M382.500 123.500L387 119.500V121.800H391.500V125.200H387V127.500Z" fill="url(#gOr)" stroke="#a86414" stroke-width="0.900" stroke-linejoin="round"/>
<path d="M397.800 119H403.200L400.500 122.500Z" fill="#3a3a3a"/>
<!-- forward disabled -->
<rect x="410.500" y="113.500" width="13" height="13" fill="#cdd1d5" stroke="#a9afb5"/>
<path d="M414 116.500H421M417 118.500H421M419 120.500H421" stroke="#b4bac0" stroke-width="0.900"/>
<path d="M418.500 123.500L414 119.500V121.800H409.500V125.200H414V127.500Z" fill="#d9c9b3" stroke="#b5a48c" stroke-width="0.900" stroke-linejoin="round"/>
<path d="M430.800 119H436.200L433.500 122.500Z" fill="#c4c4c4"/>
<!-- find selection -->
<rect x="448.500" y="113.500" width="11.500" height="6" fill="url(#gOr)" stroke="#a86414"/>
<path d="M459 123L463.300 127.300" stroke="#222" stroke-width="2.200" stroke-linecap="round"/>
<circle cx="456.300" cy="119.900" r="4.300" fill="#cfe2f5" stroke="#54667a" stroke-width="1.300"/>
<path d="M453.500 119.900H459" stroke="#9db5cc" stroke-width="0.800"/>
<!-- find prev -->
<rect x="471.500" y="113.500" width="11.500" height="6" fill="url(#gOr)" stroke="#a86414"/>
<path d="M474.500 122.500L480 117.500V120.300H486.500V124.700H480V127.500Z" fill="url(#gBl)" stroke="#1f5fa5" stroke-width="1" stroke-linejoin="round"/>
<!-- find next -->
<rect x="498.500" y="113.500" width="11.500" height="6" fill="url(#gOr)" stroke="#a86414"/>
<path d="M506.500 122.500L501 117.500V120.300H494.500V124.700H501V127.500Z" fill="url(#gBl)" stroke="#1f5fa5" stroke-width="1" stroke-linejoin="round"/>
<!-- toggle highlight -->
<rect x="517.500" y="113.500" width="11.500" height="6" fill="url(#gOr)" stroke="#a86414"/>
<rect x="521.500" y="121.500" width="11.500" height="6" fill="url(#gGr)" stroke="#6a6a6a"/>
<path d="M518 120.500L521 126.500M529.500 114.500L532.500 120.500" stroke="#777" stroke-width="0.900" stroke-dasharray="1 1"/>
<!-- rect select -->
<rect x="540.500" y="113.500" width="12.500" height="10.500" fill="none" stroke="#222" stroke-width="1.200" stroke-dasharray="1.300 1.300"/>
<path d="M550.500 119.500L556 125L552.500 125.500L550.500 128.500Z" fill="#5d7389" stroke="#3a4f65" stroke-width="0.700"/>
<!-- prev bookmark -->
<path d="M575.500 113.500H582L584.800 116.500L582 119.500H575.500Z" fill="#93dfe8" stroke="#4aa0b3" stroke-width="0.900"/>
<path d="M574.300 115.500L579.500 121.500H576.800V127.500H571.800V121.500H569.200Z" fill="#fbc466" stroke="#c58a2c" stroke-width="0.900" stroke-linejoin="round"/>
<!-- next bookmark -->
<path d="M598.500 121.500H605L607.800 124.500L605 127.500H598.500Z" fill="#93dfe8" stroke="#4aa0b3" stroke-width="0.900"/>
<path d="M597.300 125.500L602.500 119.500H599.800V113.500H594.800V119.500H592.200Z" fill="#fbc466" stroke="#c58a2c" stroke-width="0.900" stroke-linejoin="round"/>
<!-- toggle bookmark -->
<path d="M615.500 113.500H622L624.800 116.500L622 119.500H615.500Z" fill="#93dfe8" stroke="#4aa0b3" stroke-width="0.900"/>
<path d="M621.500 121.500H628L630.800 124.500L628 127.500H621.500Z" fill="#e8e8e8" stroke="#aeaeae" stroke-width="0.900"/>
<path d="M617.500 121L620.500 126.500M624.500 119.500L626 121" stroke="#333" stroke-width="1" stroke-dasharray="1 1.200"/>
<!-- shift left -->
<path d="M644.500 118.500L650 114V116.500H655V120.500H650V123Z" fill="url(#gBl)" stroke="#1f5f95" stroke-width="1" stroke-linejoin="round"/>
<path d="M656.500 115.500H660.500M656.500 117.500H660.500M656.500 119.500H660.500M656.500 121.500H660.500M656.500 123.500H660.500M646.500 125.500H660.500M646.500 127.500H660.500" stroke="#333" stroke-width="1" stroke-dasharray="1.500 0.500"/>
<!-- shift right -->
<path d="M678 118.500L672.500 114V116.500H667.500V120.500H672.500V123Z" fill="url(#gBl)" stroke="#1f5f95" stroke-width="1" stroke-linejoin="round"/>
<path d="M679.500 115.500H683.500M679.500 117.500H683.500M679.500 119.500H683.500M679.500 121.500H683.500M679.500 123.500H683.500M669.500 125.500H683.500M669.500 127.500H683.500" stroke="#333" stroke-width="1" stroke-dasharray="1.500 0.500"/>
<!-- record -->
<circle cx="704" cy="120.800" r="5.600" fill="#e74c3c" stroke="#c23a2c" stroke-width="0.800"/>
<rect x="721.500" y="115.500" width="11.500" height="11" fill="#ebebeb" stroke="#b8b8b8"/>
<!-- comment -->
<path d="M749.500 121.500L752.500 114.500L753.800 121.500L757 114.500" fill="none" stroke="#1f9a0a" stroke-width="2.600" stroke-linejoin="round" stroke-linecap="round"/>
<path d="M749.500 121.500L752.500 114.500L753.800 121.500L757 114.500" fill="none" stroke="#b8f06a" stroke-width="0.900" stroke-linejoin="round" stroke-linecap="round"/>
<path d="M759.500 117.500H763.500M759.500 119.500H763.500M759.500 121.500H763.500M749.500 123.500H763.500M749.500 125.500H763.500M749.500 127.500H763.500" stroke="#333" stroke-width="1" stroke-dasharray="1.500 0.500"/>
<!-- uncomment -->
<path d="M782.500 117.500H786.500M782.500 119.500H786.500M782.500 121.500H786.500M772.500 123.500H786.500M772.500 125.500H786.500M772.500 127.500H786.500" stroke="#111" stroke-width="1.100" stroke-dasharray="1.500 0.500"/>
</svg>
<svg class="a" style="left:1347px;top:115px" width="11" height="11" viewBox="0 0 12 12"><rect x="0.500" y="0.500" width="10" height="10" fill="#fff" stroke="#8a8a8a"/><path d="M5.500 0.500V10.500M0.500 5.500H10.500" stroke="#555" stroke-width="0.800"/><path d="M3 3L8 8M8 3L3 8" stroke="#000" stroke-width="1"/><path d="M4 5.500L5.500 4L7 5.500L5.500 7Z" fill="#000"/></svg>

<div class="a" style="left:241px;top:134px;width:1092px;height:401px;background:#fff"></div>
<div class="a" style="left:241px;top:134px;width:27px;height:401px;background:#e9e8e2"></div>
<div class="a" style="left:268px;top:134px;width:1px;height:401px;background:#8e8f8f"></div>
<div class="a" style="left:241px;top:535px;width:1121px;height:1px;background:#8e8f8f"></div>
<div class="a" style="left:298px;top:440px;width:1035px;height:18px;background:#e9eff8"></div>
<div class="t ln" style="top:139px">1</div>
<div class="t ln" style="top:157px">2</div>
<div class="t ln" style="top:175px">3</div>
<div class="t ln" style="top:193px">4</div>
<div class="t ln" style="top:211px">5</div>
<div class="t ln" style="top:229px">6</div>
<div class="t ln" style="top:247px">7</div>
<div class="t ln" style="top:265px">8</div>
<div class="t ln" style="top:283px">9</div>
<div class="t ln" style="top:301px">10</div>
<div class="t ln" style="top:319px">11</div>
<div class="t ln" style="top:337px">12</div>
<div class="t ln" style="top:355px">13</div>
<div class="t ln" style="top:373px">14</div>
<div class="t ln" style="top:391px">15</div>
<div class="t ln" style="top:409px">16</div>
<div class="t ln" style="top:427px">17</div>
<div class="t ln" style="top:445px">18</div>
<div class="t ln" style="top:463px">19</div>
<div class="t code" style="top:134px"><span class="k">package</span> ejemplo;</div>
<div class="t code" style="top:170px"><span class="k">import</span> javax.swing.<span class="hl">JOptionPane</span>;</div>
<div class="t code" style="top:188px"><span class="c">/**</span></div>
<div class="t code" style="top:206px"><span class="c"> *</span></div>
<div class="t code" style="top:224px"><span class="c"> * @author sonia</span></div>
<div class="t code" style="top:242px"><span class="c"> */</span></div>
<div class="t code" style="top:260px"><span class="k">public</span> <span class="k">class</span> <b>Ejemplo</b> {</div>
<div class="t code" style="top:278px">    <span class="c">/**</span></div>
<div class="t code" style="top:296px"><span class="c">     * @param <b class="ca">args</b> the command line arguments</span></div>
<div class="t code" style="top:314px"><span class="c">     */</span></div>
<div class="t code" style="top:332px">    <span class="k">public</span> <span class="k">static</span> <span class="k">void</span> <b><i>main</i></b>(String[] args) {</div>
<div class="t code" style="top:350px">        System.<i class="f">out</i>.println(<span class="s">"Hola mundo"</span>);</div>
<div class="t code" style="top:368px">        System.<i class="f">out</i>.println(<span class="s">"Creando mi primer programa"</span>);</div>
<div class="t code" style="top:386px">        <span class="hl">JOptionPane</span>.<i>showMessageDialog</i>(<span class="k">null</span>,<span class="s">"Ahora mostramos un mensaje emergente."</span>);</div>
<div class="t code" style="top:404px">    }</div>
<div class="t code" style="top:422px">}</div>
<div class="a" style="left:276px;top:174px;width:11px;height:11px;border:1px solid #4e4e4e;background:#fff"></div>
<div class="a" style="left:279px;top:179px;width:5px;height:1px;background:#222"></div>
<div class="a" style="left:276px;top:192px;width:11px;height:11px;border:1px solid #4e4e4e;background:#fff"></div>
<div class="a" style="left:279px;top:197px;width:5px;height:1px;background:#222"></div>
<div class="a" style="left:281px;top:203px;width:1px;height:49px;background:#4e4e4e"></div>
<div class="a" style="left:281px;top:251px;width:6px;height:1px;background:#4e4e4e"></div>
<div class="a" style="left:276px;top:282px;width:11px;height:11px;border:1px solid #4e4e4e;background:#fff"></div>
<div class="a" style="left:279px;top:287px;width:5px;height:1px;background:#222"></div>
<div class="a" style="left:281px;top:293px;width:1px;height:31px;background:#4e4e4e"></div>
<div class="a" style="left:281px;top:323px;width:6px;height:1px;background:#4e4e4e"></div>
<div class="a" style="left:276px;top:336px;width:11px;height:11px;border:1px solid #4e4e4e;background:#fff"></div>
<div class="a" style="left:279px;top:341px;width:5px;height:1px;background:#222"></div>
<div class="a" style="left:281px;top:347px;width:1px;height:67px;background:#4e4e4e"></div>
<div class="a" style="left:281px;top:413px;width:6px;height:1px;background:#4e4e4e"></div>
<div class="a gd" style="left:298px;top:206px;height:54px"></div>
<div class="a gd" style="left:298px;top:278px;height:144px"></div>
<div class="a gd" style="left:330px;top:296px;height:36px"></div>
<div class="a gd" style="left:330px;top:350px;height:54px"></div>
<div class="a" style="left:1333px;top:134px;width:16px;height:401px;background:#f0f0f0"></div>
<div class="a" style="left:1333px;top:151px;width:15px;height:309px;background:#cdcdcd"></div>
<svg class="a" style="left:1336px;top:139px" width="9" height="7" viewBox="0 0 9 7"><path d="M1 5.800L4.500 2.300L8 5.800" fill="none" stroke="#3c3c3c" stroke-width="1.900"/></svg>
<svg class="a" style="left:1336px;top:524px" width="9" height="7" viewBox="0 0 9 7"><path d="M1 1.200L4.500 4.700L8 1.200" fill="none" stroke="#3c3c3c" stroke-width="1.900"/></svg>
<div class="a" style="left:1349px;top:134px;width:13px;height:401px;background:#f0f0f0"></div>
<div class="a" style="left:1351px;top:141px;width:8px;height:8px;background:#5cb865;border:1px solid #d4e8d4"></div>
<div class="a" style="left:1350px;top:181px;width:11px;height:3px;background:#b9b563"></div>
<div class="a" style="left:1350px;top:345px;width:11px;height:3px;background:#b9b563"></div>
<div class="a" style="left:1351px;top:386px;width:8px;height:1px;background:#555"></div>
<div class="a" style="left:1354px;top:385px;width:3px;height:3px;background:#333"></div>
<svg class="a" style="left:248px;top:538px" width="12" height="15" viewBox="0 0 12 15"><path d="M1.500 1L9.500 7.500L1.500 14" fill="none" stroke="#b0b0b0" stroke-width="2.200"/><path d="M1.500 1L9.500 7.500L1.500 14" fill="none" stroke="#f6f6f6" stroke-width="0.800"/></svg>
<svg class="a" style="left:1347px;top:540px" width="9" height="9" viewBox="0 0 9 9"><path d="M1 1L8 8M8 1L1 8" stroke="#222" stroke-width="1.200"/></svg>
<div class="a" style="left:938px;top:134px;width:1px;height:342px;background:#f7a9a9"></div>
<!-- /EDITOR -->
<!-- OUTPUT -->
<div class="a" style="left:240px;top:560px;width:1123px;height:144px;border:1px solid #8e8f8f;background:#f0f0f0"></div>
<div class="a tabbar" style="left:241px;top:561px;width:1121px;height:19px"></div>
<div class="a" style="left:241px;top:580px;width:1121px;height:1px;background:#8e8f8f"></div>
<div class="a" style="left:241px;top:561px;width:61px;height:19px;background:#fff"></div>
<div class="a vsep" style="left:302px;top:561px;height:19px"></div>
<div class="t tabt" style="left:245px;top:566px;letter-spacing:0.15px">Output</div>
<svg class="a" style="left:289px;top:567px" width="8" height="8"><use href="#tabx"/></svg>
<div class="a" style="left:1345px;top:571px;width:11px;height:2px;background:#333"></div>
<!-- inner tabs -->
<div class="a" style="left:266px;top:585px;width:97px;height:20px;background:#f0f0f0;border:1px solid #dadada;border-bottom:none"></div>
<div class="a" style="left:362px;top:582px;width:96px;height:24px;background:#fbfbfb;border:1px solid #dadada;border-bottom:none"></div>
<div class="a" style="left:264px;top:604px;width:1097px;height:98px;background:#fff;border:1px solid #dadada"></div>
<div class="a" style="left:363px;top:604px;width:94px;height:2px;background:#fbfbfb"></div>
<div class="t tr" style="left:270px;top:590px;letter-spacing:-0.05px">Delete Project</div>
<svg class="a" style="left:346px;top:591px" width="8" height="8"><use href="#tabx"/></svg>
<div class="t tr" style="left:369px;top:588px;font-size:11px;letter-spacing:-0.12px">ejemplo (run)</div>
<svg class="a" style="left:441px;top:589px" width="8" height="8"><use href="#tabx"/></svg>
<!-- left icons -->
<svg class="a" style="left:241px;top:582px" width="24" height="90" viewBox="241 582 24 90">
<defs><linearGradient id="gRunG" x1="0" y1="0" x2="1" y2="0"><stop offset="0" stop-color="#d8f5c0"/><stop offset="1" stop-color="#58c028"/></linearGradient>
<linearGradient id="gRunY" x1="0" y1="0" x2="1" y2="0"><stop offset="0" stop-color="#eef0b8"/><stop offset="1" stop-color="#b8bc48"/></linearGradient></defs>
<path d="M244.500 584.500L252 591.500L244.500 598.500Z" fill="url(#gRunG)" stroke="#1e8a0e" stroke-width="1.200" stroke-linejoin="round"/>
<path d="M250.500 584.500L258.500 591.500L250.500 598.500Z" fill="url(#gRunG)" stroke="#1e8a0e" stroke-width="1.200" stroke-linejoin="round"/>
<path d="M244.500 607.500L252 614.500L244.500 621.500Z" fill="url(#gRunY)" stroke="#8e9420" stroke-width="1.200" stroke-linejoin="round"/>
<path d="M250.500 607.500L258.500 614.500L250.500 621.500Z" fill="url(#gRunY)" stroke="#8e9420" stroke-width="1.200" stroke-linejoin="round"/>
<rect x="245.500" y="631.500" width="13" height="13" fill="#d9bebe" stroke="#c8a8a8"/>
<rect x="250" y="636" width="4" height="4" fill="#ebe0e0"/>
<path d="M246.500 664.500L256 656" stroke="#4a5560" stroke-width="4.200" stroke-linecap="round"/>
<circle cx="256.800" cy="655.300" r="3" fill="#fff" stroke="#4a5560" stroke-width="1.300"/>
<circle cx="245.800" cy="665.200" r="3" fill="#fff" stroke="#4a5560" stroke-width="1.300"/>
<path d="M257 655L260.500 651.500" stroke="#f0f0f0" stroke-width="2.400"/>
<path d="M245.500 665.500L242 669" stroke="#f0f0f0" stroke-width="2.400"/>
<path d="M246.500 664.500L256 656" stroke="#fff" stroke-width="1.900" stroke-linecap="round"/>
<circle cx="247" cy="655.500" r="2.100" fill="#f8e0b0" stroke="#c8861a" stroke-width="1.300"/>
<rect x="253.500" y="663.500" width="5.500" height="3.500" rx="0.800" fill="#e8e8e8" stroke="#4a5560" stroke-width="0.900"/>
</svg>
<!-- output text -->
<div class="t out" style="top:613px;color:#969696">run:</div>
<div class="t out" style="top:629px">Hola mundo</div>
<div class="t out" style="top:645px">Creando mi primer programa</div>
<div class="t out" style="top:661px;color:#009900">BUILD SUCCESSFUL (total time: 32 seconds)</div>
<!-- scrollbar -->
<div class="a" style="left:1343px;top:608px;width:16px;height:91px;background:#f0f0f0"></div>
<svg class="a" style="left:1346px;top:613px" width="9" height="7" viewBox="0 0 9 7"><path d="M1 5.800L4.500 2.300L8 5.800" fill="none" stroke="#3c3c3c" stroke-width="1.900"/></svg>
<svg class="a" style="left:1346px;top:689px" width="9" height="7" viewBox="0 0 9 7"><path d="M1 1.200L4.500 4.700L8 1.200" fill="none" stroke="#3c3c3c" stroke-width="1.900"/></svg>
<!-- /OUTPUT -->
<!-- STATUS -->
<svg class="a" style="left:1126px;top:708px" width="18" height="17" viewBox="0 0 18 17"><path d="M4.500 1H13Q16.500 1 16.500 4.500V8Q16.500 11.500 13 11.500H12.500L14 15.500L9 11.500H4.500Q1 11.500 1 8V4.500Q1 1 4.500 1Z" fill="#eaf0f7" stroke="#6f7f92" stroke-width="1"/><text x="5.700" y="10.300" font-family="Liberation Sans,sans-serif" font-weight="bold" font-size="11" fill="#000">2</text></svg>
<div class="a" style="left:1146px;top:710px;width:1px;height:15px;background:#a0a0a0"></div>
<div class="a" style="left:1257px;top:710px;width:1px;height:15px;background:#a0a0a0"></div>
<div class="a" style="left:1281px;top:710px;width:1px;height:15px;background:#a0a0a0"></div>
<div class="t tr" style="left:1192px;top:712px;letter-spacing:0px">18:1</div>
<div class="t tr" style="left:1262px;top:712px;letter-spacing:-0.6px">INS</div>
<div class="t tr" style="left:1284px;top:712px;letter-spacing:-0.39px">Windows (CRLF)</div>
<!-- /STATUS -->
<!-- TASKBAR -->
<div class="a" style="left:0;top:728px;width:1366px;height:40px;background:linear-gradient(90deg,#2a2a27 0,#2b2c24 30%,#333431 42%,#33342f 58%,#2c2d24 64%,#2b2c22 100%)"></div>
<div class="a" style="left:786px;top:728px;width:48px;height:40px;background:#5b5e51"></div>
<div class="a" style="left:48px;top:728px;width:343px;height:40px;background:#f2f2f2;border-top:1px solid #c8c8c8;border-bottom:1px solid #c8c8c8"></div>
<div class="t" style="left:88px;top:741px;font-size:15px;color:#454545;letter-spacing:-0.28px;font-family:'Liberation Sans',sans-serif">Escribe aquí para buscar</div>
<div class="a ul" style="left:447px;width:40px"></div>
<div class="a ul" style="left:496px;width:40px"></div>
<div class="a ul" style="left:594px;width:40px"></div>
<div class="a ul" style="left:643px;width:40px"></div>
<div class="a ul" style="left:741px;width:40px"></div>
<div class="a ul" style="left:786px;width:48px"></div>
<div class="a ul" style="left:839px;width:40px"></div>
<svg class="a" style="left:0;top:728px" width="1366" height="40" viewBox="0 728 1366 40">
<!-- windows logo -->
<path d="M16 742.300L22.700 741.300V747.400H16ZM23.600 741.200L32 740V747.400H23.600ZM16 748.300H22.700V754.500L16 753.600ZM23.600 748.300H32V756L23.600 754.700Z" fill="#fff"/>
<!-- search -->
<circle cx="70" cy="745.500" r="5.200" fill="none" stroke="#333" stroke-width="1.500"/><path d="M66.300 749.500L60.500 755.800" stroke="#333" stroke-width="1.500"/>
<!-- cortana -->
<circle cx="416" cy="747.800" r="6.800" fill="none" stroke="#fff" stroke-width="2"/>
<!-- writer -->
<path d="M458 737H470L476 743V759H458Z" fill="#fff" stroke="#1e88d8" stroke-width="2" stroke-linejoin="round"/>
<path d="M469.500 736.500L476.500 743.500H469.500Z" fill="#1573c4"/>
<path d="M461 745.500H466M461 748.500H466M461 752H473.500M461 755H473.500" stroke="#1e88d8" stroke-width="1.500"/>
<rect x="467.700" y="744.700" width="5.600" height="4.600" fill="#fff" stroke="#1e88d8" stroke-width="1.400"/>
<!-- explorer -->
<path d="M505.500 741Q505.500 739 507.500 739H513L515 741H525Q527 741 527 743V757H505.500Z" fill="#f9b62b"/>
<path d="M505.500 743H527V757H505.500Z" fill="#ffd868"/>
<path d="M510 757V751H522.500V757H519.500V754H513V757Z" fill="#3b8de0"/>
<path d="M505.500 755.500H527V757H505.500Z" fill="#e5a52a"/>
<!-- edge -->
<circle cx="565.300" cy="747.300" r="11.800" fill="#1b7fd6"/>
<path d="M565.300 735.500A11.800 11.800 0 0 1 577.100 747.300C577.100 751 574 753 570.500 752.500C566.500 752 565.500 748.500 568 746.500C565 745 559 746 557 751C554.500 744 558 736 565.300 735.500Z" fill="#3cc7a0"/>
<path d="M577.100 747.300C577.100 751 574 753 570.500 752.500C566.500 752 565.500 748.500 568 746.500C570 744.500 569 741 565 741C569 738 577.500 741 577.100 747.300Z" fill="#58d36a"/>
<path d="M556.500 752C557 747 561 744 566 744.500C563 746 562 749 563.500 752C565 755.500 569 757.500 573.500 756C569 760.500 559.500 759.500 556.500 752Z" fill="#0f4fa0"/>
<!-- snipping -->
<ellipse cx="613.500" cy="746" rx="10.500" ry="7.300" fill="#f1f1f1" stroke="#d4483e" stroke-width="1.600" transform="rotate(-22 613.500 746)"/>
<path d="M604 752C607 755 611 755.500 615 754" stroke="#9a9a9a" stroke-width="2.400" fill="none"/>
<path d="M612 741L621 754M622 739.500L612 753" stroke="#9aa0a6" stroke-width="1"/>
<circle cx="621" cy="756" r="2.400" fill="none" stroke="#2da0e8" stroke-width="1.500"/><circle cx="624.500" cy="751.500" r="2.400" fill="none" stroke="#2da0e8" stroke-width="1.500"/>
<!-- chrome -->
<circle cx="663" cy="747.800" r="11.300" fill="#fbc116"/>
<path d="M663 747.800L653.200 742.100A11.300 11.300 0 0 1 672.800 742.100Z" fill="#e33b2e"/>
<path d="M653.200 742.150A11.300 11.300 0 0 1 672.800 742.150L663 742.150Z" fill="#e33b2e"/>
<path d="M653.200 742.150A11.300 11.300 0 0 0 663 759.100L667.500 750.500L658.400 750.400Z" fill="#2ba24c"/>
<circle cx="663" cy="747.800" r="5.300" fill="#fff"/><circle cx="663" cy="747.800" r="4.200" fill="#4a8af4"/>
<!-- store -->
<path d="M706.500 742V739.500Q706.500 736.800 709 736.800H714Q716.500 736.800 716.500 739.500V742" fill="none" stroke="#f3f3f3" stroke-width="1.500"/>
<path d="M700.500 741.500H722.500V759.500H700.500Z" fill="#f3f3f3"/>
<rect x="707" y="746.500" width="4" height="4" fill="#f25022"/><rect x="712" y="746.500" width="4" height="4" fill="#7fba00"/><rect x="707" y="751.500" width="4" height="4" fill="#00a4ef"/><rect x="712" y="751.500" width="4" height="4" fill="#ffb900"/>
<!-- spotify -->
<circle cx="760.800" cy="747.800" r="11.300" fill="#1ed760"/>
<path d="M754 743.800C758.500 742.500 764 743 768 745.200" stroke="#111" stroke-width="2.100" fill="none" stroke-linecap="round"/>
<path d="M754.800 747.800C758.500 746.800 763 747.200 766.800 749.200" stroke="#111" stroke-width="1.800" fill="none" stroke-linecap="round"/>
<path d="M755.500 751.500C758.500 750.800 762 751 765.300 752.800" stroke="#111" stroke-width="1.500" fill="none" stroke-linecap="round"/>
<!-- netbeans -->
<svg x="799.500" y="736" width="21" height="24"><use href="#nbcube"/></svg>
<!-- acrobat -->
<rect x="848.500" y="737.300" width="21" height="20.500" rx="3" fill="#b30b00"/>
<path d="M853 754C855 752.500 857.500 748 858.500 743.500C859 741 857.500 740.500 857.800 743C858.200 746.500 861 750 864.500 750.800C866.500 751.200 866 749.500 863.500 749.700C860 750 856 751.500 853 754Z" fill="none" stroke="#fff" stroke-width="1.300" stroke-linejoin="round"/>
<!-- tray -->
<defs><mask id="mMoon"><rect x="975" y="735" width="30" height="30" fill="#fff"/><circle cx="985.800" cy="744.300" r="7.600" fill="#000"/></mask></defs><circle cx="990.300" cy="748.200" r="8.800" fill="#f9c51c" mask="url(#mMoon)"/>
<path d="M1057 751.500L1063 745.500L1069 751.500" fill="none" stroke="#fff" stroke-width="1.400"/>
<rect x="1082.500" y="743.500" width="7.500" height="8.500" rx="1.800" fill="none" stroke="#fff" stroke-width="1.200"/><path d="M1090 746.500L1093 745V750.500L1090 749" fill="none" stroke="#fff" stroke-width="1.100"/><path d="M1083.500 741.300Q1086.300 740 1089 741.300M1083.500 754.200Q1086.300 755.500 1089 754.200" fill="none" stroke="#fff" stroke-width="1"/>
<circle cx="1109.500" cy="747.500" r="7" fill="#e0182d"/>
<path d="M1105.500 750.500V744.500L1109.500 748.500L1113.500 744.500V750.500" fill="none" stroke="#fff" stroke-width="1.700"/>
<circle cx="1115" cy="752" r="3.200" fill="#3a3a36" stroke="#ddd" stroke-width="0.800"/>
<path d="M1131 755.500A11 11 0 0 1 1142 744.500M1134 755.500A8 8 0 0 1 1142 747.500M1137 755.500A5 5 0 0 1 1142 750.500" fill="none" stroke="#e8e8e8" stroke-width="1.300"/><circle cx="1141" cy="754.500" r="1.500" fill="#fff"/>
<rect x="1155.500" y="744.500" width="11.500" height="7.500" fill="none" stroke="#fff" stroke-width="1.300"/><path d="M1167.500 746.500V750" stroke="#fff" stroke-width="1.200"/><path d="M1152.300 741.800V744M1154.700 741.800V744" stroke="#fff" stroke-width="1"/><path d="M1151.300 744H1155.700V746.500Q1155.700 748.500 1153.500 748.500Q1151.300 748.500 1151.300 746.500Z" fill="#fff"/><path d="M1153.500 748.500V752.500H1156" stroke="#fff" stroke-width="1" fill="none"/>
<path d="M1175.5 743.7L1179.5 741.2L1183.5 743.7L1179.5 746.2ZM1183.5 743.7L1187.5 741.2L1191.5 743.7L1187.5 746.2ZM1175.5 748.7L1179.5 746.2L1183.5 748.7L1179.5 751.2ZM1183.5 748.7L1187.5 746.2L1191.5 748.7L1187.5 751.2ZM1179.9 753.3L1183.5 751.1L1187.1 753.3L1183.5 755.5Z" fill="#fff"/>
<rect x="1174.800" y="747.300" width="8.700" height="8.700" rx="0.800" fill="#e0182d"/>
<text x="1176.900" y="754.700" font-family="Liberation Sans,sans-serif" font-size="8" font-weight="bold" fill="#fff">2</text>
<path d="M1199 745.500H1202L1206 741.500V754.500L1202 750.500H1199Z" fill="none" stroke="#fff" stroke-width="1.200" stroke-linejoin="round"/>
<path d="M1208.500 745Q1210.500 748 1208.500 751M1211 743Q1214 748 1211 753M1213.500 741Q1217.500 748 1213.500 755" fill="none" stroke="#fff" stroke-width="1.100"/>
<path d="M1225 753.500Q1222 753.500 1222.500 750.500Q1223 748 1226 748.500Q1227.500 744.500 1231.500 745.500Q1234 746 1234.500 748.500Q1239 748.500 1239 751.500Q1239 753.500 1236.500 753.500Z" fill="#9a9a96"/>
<path d="M1224.500 742L1238.500 755.500" stroke="#2b2c22" stroke-width="3"/><path d="M1224.500 742L1238.500 755.500" stroke="#b5b5b0" stroke-width="1.300"/>
<path d="M1325.500 740.500H1341.500V752.500H1336L1333.500 755.500L1331 752.500H1325.500Z" fill="#fff"/>
<path d="M1328.500 744H1338.500M1328.500 746.500H1338.500M1328.500 749H1335" stroke="#2b2c22" stroke-width="1"/>
</svg>
<div class="t" style="left:1010px;top:740px;font-size:15px;color:#fff;letter-spacing:-0.9px;font-family:'Liberation Sans',sans-serif">26°C</div>
<div class="t" style="left:1264px;top:733px;font-size:12px;color:#fff;letter-spacing:-0.3px;font-family:'Liberation Sans',sans-serif">20:38</div>
<div class="t" style="left:1250px;top:751px;font-size:12px;color:#fff;letter-spacing:-0.35px;font-family:'Liberation Sans',sans-serif">19/09/2021</div>
<!-- /TASKBAR -->
<!-- OVERLAY -->
<div class="a" style="left:475px;top:79px;width:146px;height:18px;background:#ffffe1;border:1px solid #000"></div>
<div class="t ui" style="left:479px;top:83px;font-size:12px;letter-spacing:-0.18px">Run Project (ejemplo) (F6)</div>
<svg class="a" style="left:450px;top:15px" width="50" height="90" viewBox="450 15 50 90"><ellipse cx="472.800" cy="59.800" rx="13.400" ry="35.400" fill="none" stroke="#ed1c24" stroke-width="4.800"/></svg>
<!-- /OVERLAY -->
</body>
</html>
